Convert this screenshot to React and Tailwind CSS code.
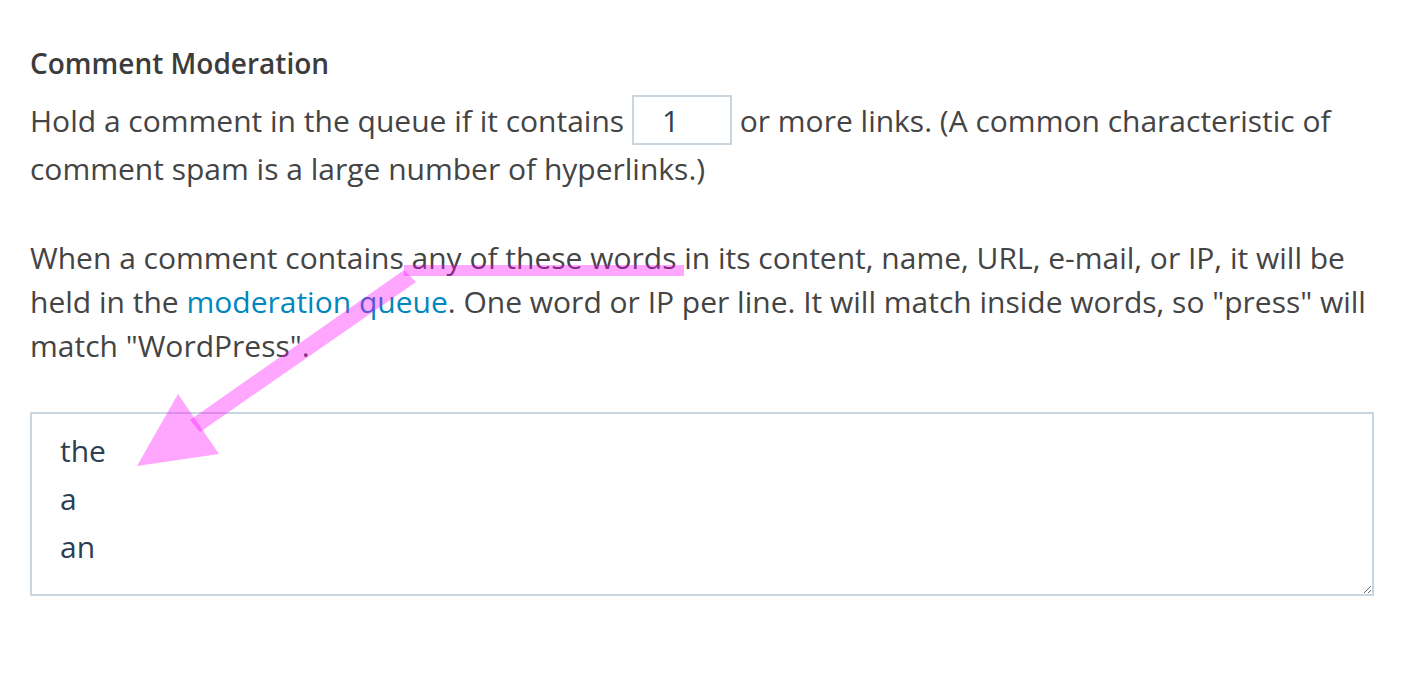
import React from 'react';

const App = () => {
  return (
    <div className="relative min-h-screen bg-white text-[#444444]" style={{ fontFamily: '"Open Sans", sans-serif' }}>
      <div className="w-[1376px] pl-[30px] pt-[45px]">
        <h3 className="text-[28px] font-semibold leading-[36px] text-[#3c3c3c]">Comment Moderation</h3>
        <p className="mt-[14px] text-[30px] leading-[47px]">
          Hold a comment in the queue if it contains{' '}
          <input
            type="text"
            defaultValue="1"
            className="w-[100px] h-[50px] border-2 border-[#c9d6e0] pl-[28px] text-[30px] text-[#2c3e50] outline-none"
          />{' '}
          or more links. (A common characteristic of comment spam is a large number of hyperlinks.)
        </p>
        <p className="mt-[44px] text-[30px] leading-[44px]">
          When a comment contains any of these words in its content, name, URL, e-mail, or IP, it will be held in the{' '}
          <a href="#" className="text-[#0087be]">moderation queue</a>. One word or IP per line. It will match inside words, so "press" will match "WordPress".
        </p>
        <textarea
          defaultValue={'the\na\nan'}
          rows={3}
          className="mt-[44px] block w-[1344px] h-[184px] border-2 border-[#c9d6e0] px-[28px] pt-[13px] text-[30px] leading-[48px] text-[#2c3e50] outline-none resize-y"
        />
      </div>

      <svg className="pointer-events-none absolute left-0 top-0" width="1406" height="678">
        <g fill="#ff00ff" fillOpacity="0.35">
          <rect x="404" y="265" width="280" height="11" />
          <polygon points="404,270 416,282 200,432 190,420" />
          <polygon points="178,394 219,454 137,466" />
        </g>
      </svg>
    </div>
  );
};

export default App;
